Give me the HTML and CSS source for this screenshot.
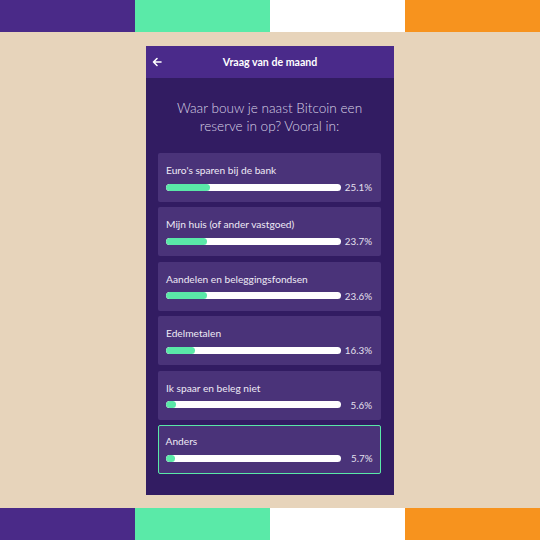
FILE: index.html
```html
<!DOCTYPE html>
<html lang="nl">
<head>
<meta charset="utf-8">
<link rel="stylesheet" href="styles.css">
</head>
<body>
<div class="stripe">
  <div class="s purple"></div><div class="s green"></div><div class="s white"></div><div class="s orange"></div>
</div>
<main class="stage">
  <section class="phone">
    <header class="topbar">
      <svg class="back" width="10" height="10" viewBox="0 0 10 10"><path d="M9 5H1.5M5 1.5L1.5 5 5 8.5" fill="none" stroke="#fff" stroke-width="1.6" stroke-linecap="round" stroke-linejoin="round"/></svg>
      <h1>Vraag van de maand</h1>
    </header>
    <div class="content">
      <p class="question">Waar bouw je naast Bitcoin een reserve in op? Vooral in:</p>
      <div class="options">
        <div class="option"><div class="label">Euro's sparen bij de bank</div><div class="row"><div class="bar"><div class="fill" style="width:25.1%"></div></div><span class="pct">25.1%</span></div></div>
        <div class="option"><div class="label">Mijn huis (of ander vastgoed)</div><div class="row"><div class="bar"><div class="fill" style="width:23.7%"></div></div><span class="pct">23.7%</span></div></div>
        <div class="option"><div class="label">Aandelen en beleggingsfondsen</div><div class="row"><div class="bar"><div class="fill" style="width:23.6%"></div></div><span class="pct">23.6%</span></div></div>
        <div class="option"><div class="label">Edelmetalen</div><div class="row"><div class="bar"><div class="fill" style="width:16.3%"></div></div><span class="pct">16.3%</span></div></div>
        <div class="option"><div class="label">Ik spaar en beleg niet</div><div class="row"><div class="bar"><div class="fill" style="width:5.6%"></div></div><span class="pct">5.6%</span></div></div>
        <div class="option selected"><div class="label">Anders</div><div class="row"><div class="bar"><div class="fill" style="width:5.7%"></div></div><span class="pct">5.7%</span></div></div>
      </div>
    </div>
  </section>
</main>
<div class="stripe">
  <div class="s purple"></div><div class="s green"></div><div class="s white"></div><div class="s orange"></div>
</div>
</body>
</html>
```
FILE: styles.css
```css
* { box-sizing: border-box; }
html, body { margin: 0; padding: 0; }
body {
  width: 540px;
  height: 540px;
  background: #e7d4bb;
  font-family: Lato, "Open Sans", sans-serif;
  display: flex;
  flex-direction: column;
  overflow: hidden;
}
.stripe { display: flex; height: 32px; flex: none; }
.s { flex: 1; }
.purple { background: #4a2a88; }
.green { background: #5aeaa8; }
.white { background: #ffffff; }
.orange { background: #f7931e; }
.stage {
  flex: 1;
  display: flex;
  justify-content: center;
  align-items: flex-start;
  padding-top: 14px;
}
.phone {
  width: 248px;
  height: 449px;
  background: #321c62;
  display: flex;
  flex-direction: column;
}
.topbar {
  height: 32px;
  background: #4a2a8a;
  display: flex;
  align-items: center;
  position: relative;
  padding-left: 6px;
}
.back { display: block; }
.topbar h1 {
  position: absolute;
  left: 0; right: 0;
  margin: 0;
  text-align: center;
  font-size: 10.6px;
  font-weight: 700;
  color: #fff;
  line-height: 32px;
  pointer-events: none;
}
.content { padding: 0 13px 0 12px; }
.question {
  margin: 21px 4px 18px;
  text-align: center;
  font-size: 13.6px;
  font-weight: 300;
  line-height: 18px;
  color: #d9d3e6;
}
.options { display: flex; flex-direction: column; gap: 5.4px; }
.option {
  background: #4a3379;
  border: 1px solid transparent;
  border-radius: 2px;
  height: 49px;
  padding: 9px 8px 0 7px;
}
.option.selected { border: 1.5px solid #5ae8a8; padding: 8.5px 7.5px 0 6.5px; }
.label {
  font-size: 10.2px;
  line-height: 14px;
  color: #eeeaf5;
}
.row {
  display: flex;
  align-items: center;
  margin-top: 3px;
  height: 14px;
}
.bar {
  width: 175px;
  height: 7px;
  background: #fff;
  border-radius: 4px;
  overflow: hidden;
  flex: none;
}
.fill { height: 100%; background: #5ae8a8; border-radius: 4px; }
.pct {
  flex: 1;
  text-align: right;
  font-size: 9.8px;
  color: #e4e0ee;
}
```
